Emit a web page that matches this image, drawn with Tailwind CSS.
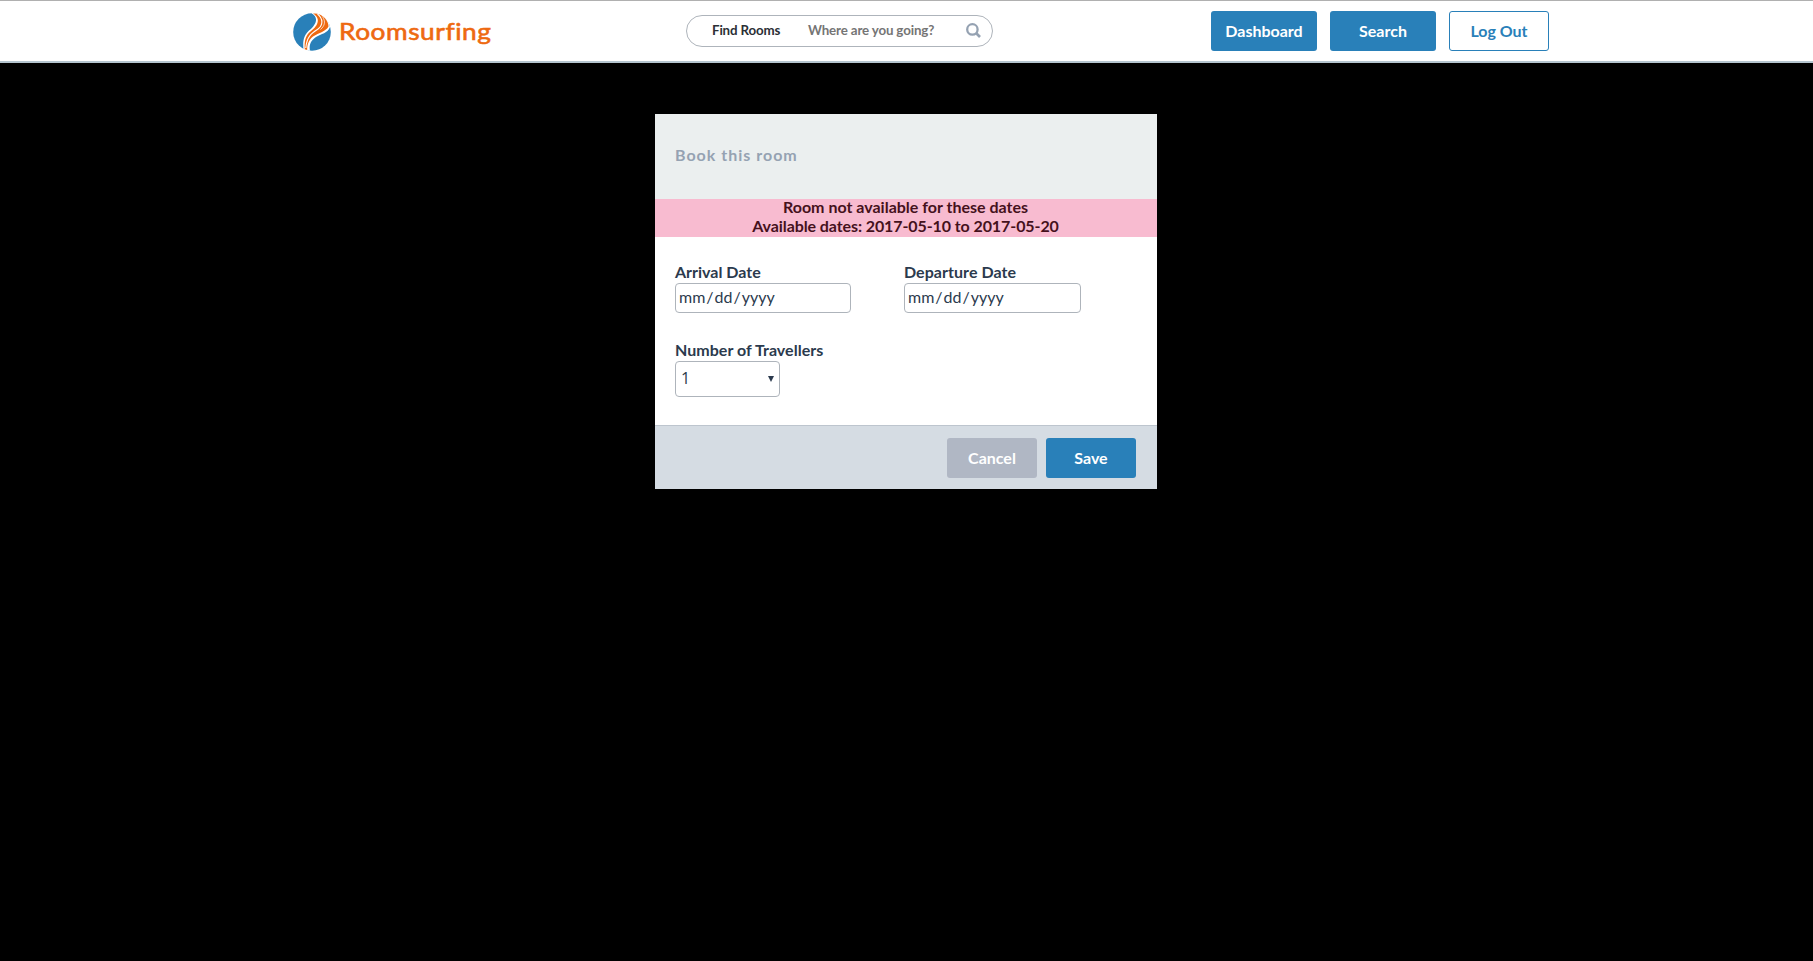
<!DOCTYPE html>
<html lang="en">
<head>
<meta charset="utf-8">
<title>Roomsurfing</title>
<script src="https://cdn.jsdelivr.net/npm/@tailwindcss/browser@4"></script>
</head>
<body class="min-h-screen bg-black font-['Lato',sans-serif] text-base leading-[19px] text-[#2b3a4d]">
<header class="flex h-[63px] items-start border-t border-b-2 border-t-[#b0b0b0] border-b-[#b5c5cf] bg-white pl-[293px]">
  <a class="mt-3 flex w-[393px]" aria-label="Roomsurfing">
    <svg class="h-[38px] w-[200px]" viewBox="0 0 200 38">
      <circle cx="19" cy="19" r="18.8" fill="#2980b9"/>
      <path d="M18.500 0.200C29 -1 36.500 8 37 14C35 20 28 21 23 24C17 28 16 33 17 37.700L10.500 36.400C9.500 28 11 22 16 17.500C22 13 27 5 18.500 0.200Z" fill="#fff"/>
      <path d="M20 0.600C30 0 35.500 8 35.500 13.500C33 18.500 26 19.500 20 23.500C15 27.500 14 33 14.200 37L11.800 36.300C11.200 28 12.500 22.500 17.500 18.500C24 14 29 6 20 .600Z" fill="#ee6910"/>
      <path d="M24.500 1C30.500 6 30 12 25 16C19 20 13.800 23 12.800 35" fill="none" stroke="#fff" stroke-width="1.100"/>
      <path d="M29.500 3.500C33 9 31.500 13 27.500 16.500" fill="none" stroke="#fff" stroke-width=".7"/>
      <text x="46" y="27.400" font-family="Lato" font-size="22.500" font-weight="400" textLength="152.500" lengthAdjust="spacingAndGlyphs" letter-spacing=".5" fill="#ee6910" style="font-variant-ligatures:none" stroke="#ee6910" stroke-width=".6">Roomsurfing</text>
    </svg>
  </a>
  <div class="mt-[14px] flex h-8 w-[307px] items-center rounded-full border border-[#aeb4bb] pr-[11px] pl-[25px] text-[13.33px] leading-4 font-bold tracking-[-0.15px]">
    <span class="w-24 pb-0.5 text-[#2b2f35]">Find Rooms</span>
    <span class="flex-1 pb-0.5 text-[#757575]">Where are you going?</span>
    <svg class="mb-0.5 h-[15px] w-[15px]" viewBox="0 0 15 15" fill="none" stroke="#95a2b2" stroke-width="2.3"><circle cx="6.4" cy="6.4" r="5.2"/><path d="M10 10l4 4" stroke-width="2.7"/></svg>
  </div>
  <nav class="mt-2.5 ml-[218px] flex gap-[13px] font-bold">
    <button class="h-10 w-[106px] rounded-[3px] bg-[#2980b9] pb-0.5 text-white">Dashboard</button>
    <button class="h-10 w-[106px] rounded-[3px] bg-[#2980b9] pb-0.5 text-white">Search</button>
    <button class="h-10 w-[100px] rounded-[3px] border border-[#2980b9] bg-white pb-0.5 text-[#2980b9]">Log Out</button>
  </nav>
</header>
<main class="pt-[51px] pl-[655px]">
  <section class="w-[502px] bg-white">
    <h1 class="flex h-[85px] items-center bg-[#ebefef] px-5 pb-1 font-bold tracking-[1px] text-[#95a2b2]">Book this room</h1>
    <div class="h-[38px] bg-[#f8bbd0] pr-px text-center font-bold text-[#45111c]">
      <div class="-mt-0.5 inline-block">
        <p>Room not available for these dates</p>
        <p class="tracking-[-0.09px]">Available dates: 2017-05-10 to 2017-05-20</p>
      </div>
    </div>
    <form class="h-[188px] px-5 pt-[25px]">
      <div class="flex gap-[53px]">
        <div>
          <label class="block h-[21px] font-bold">Arrival Date</label>
          <div class="flex h-[30px] w-[176px] items-center rounded-[4px] border border-[#aeb4bb] pb-[3px] pl-[3px]"><span>mm</span><span class="px-px">/</span><span>dd</span><span class="px-px">/</span><span>yyyy</span></div>
        </div>
        <div>
          <label class="block h-[21px] font-bold tracking-[0.05px]">Departure Date</label>
          <div class="flex h-[30px] w-[177px] items-center rounded-[4px] border border-[#aeb4bb] pb-[3px] pl-[3px]"><span>mm</span><span class="px-px">/</span><span>dd</span><span class="px-px">/</span><span>yyyy</span></div>
        </div>
      </div>
      <label class="mt-[27px] block h-[21px] font-bold tracking-[0.04px]">Number of Travellers</label>
      <div class="flex h-9 w-[105px] items-center justify-between rounded-[4px] border border-[#aeb4bb] pr-[5px] pl-[5px]">
        <span class="pb-0.5 font-['Open_Sans',sans-serif]">1</span>
        <svg class="h-1.5 w-1.5" viewBox="0 0 6 6"><path d="M0 0h6L3 6z" fill="#2b3a4d"/></svg>
      </div>
    </form>
    <footer class="flex h-16 justify-end gap-[9px] border-t border-[#bdc5ce] bg-[#d5dce3] pt-3 pr-[21px] font-bold text-white">
      <button class="h-10 w-[90px] rounded-[3px] bg-[#b0b7c4] pb-0.5">Cancel</button>
      <button class="h-10 w-[90px] rounded-[3px] bg-[#2980b9] pb-0.5">Save</button>
    </footer>
  </section>
</main>
</body>
</html>
